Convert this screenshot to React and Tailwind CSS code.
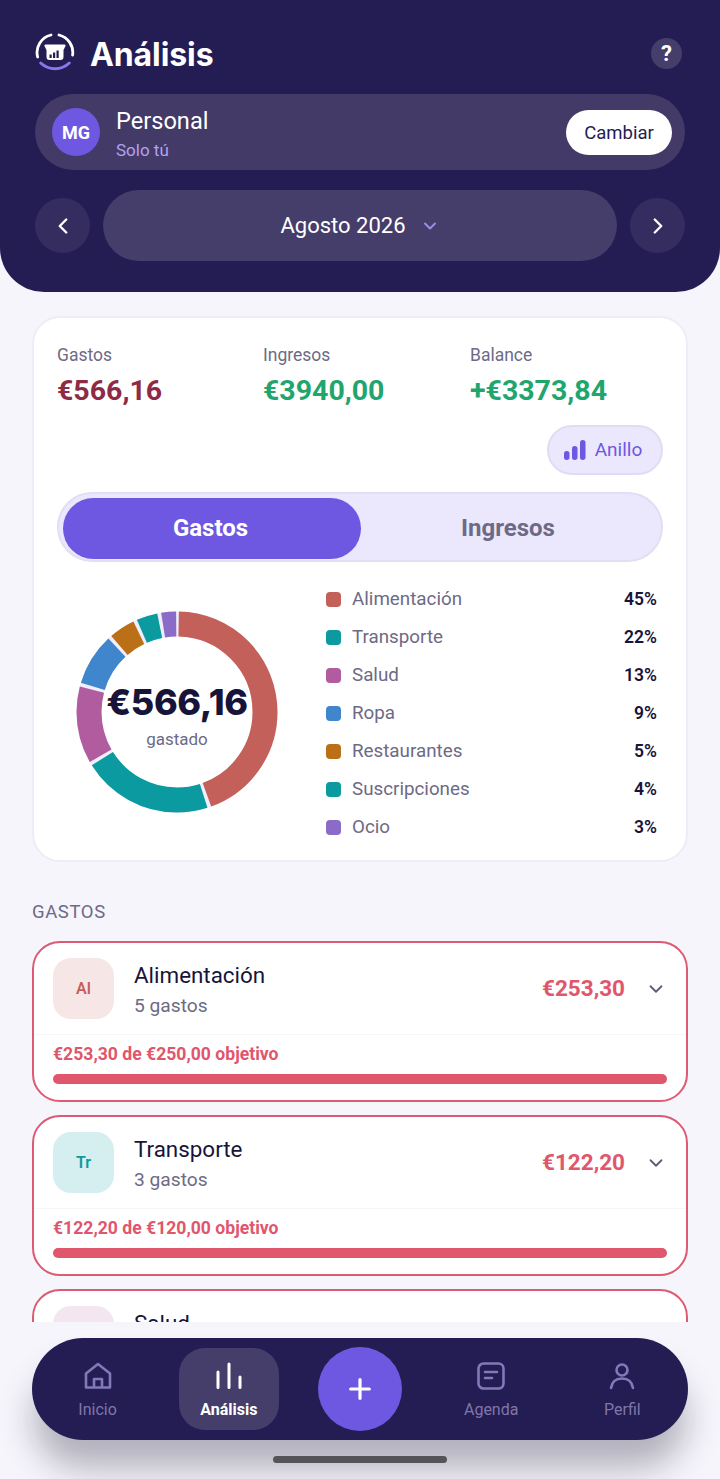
import React from "react";
import { ChevronLeft, ChevronRight, ChevronDown, Plus } from "lucide-react";

const R = "font-['Roboto',sans-serif]";

const legend = [
  ["Alimentación", "45%", "bg-[#c4605a]"],
  ["Transporte", "22%", "bg-[#0a9aa0]"],
  ["Salud", "13%", "bg-[#b05c9e]"],
  ["Ropa", "9%", "bg-[#3f86cc]"],
  ["Restaurantes", "5%", "bg-[#bb7018]"],
  ["Suscripciones", "4%", "bg-[#0a9aa0]"],
  ["Ocio", "3%", "bg-[#8a6cc8]"],
];

const segments = [
  [44.7, "#c4605a"],
  [21.6, "#0a9aa0"],
  [13, "#b05c9e"],
  [8.9, "#3f86cc"],
  [4.8, "#bb7018"],
  [4, "#0a9aa0"],
  [3, "#8a6cc8"],
];

function Donut() {
  const r = 88;
  const c = 2 * Math.PI * r;
  let acc = 0;
  return (
    <svg width="204" height="204" viewBox="0 0 204 204" className="block">
      <g transform="rotate(-90 102 102)">
        <circle cx="102" cy="102" r={r} fill="none" stroke="#f0edfc" strokeWidth="25" />
        {segments.map(([p, col], i) => {
          const len = (p / 100) * c;
          const el = (
            <circle
              key={i}
              cx="102"
              cy="102"
              r={r}
              fill="none"
              stroke={col}
              strokeWidth="25"
              strokeDasharray={`${len - 3.4} ${c - len + 3.4}`}
              strokeDashoffset={-(acc + 1.7)}
            />
          );
          acc += len;
          return el;
        })}
      </g>
    </svg>
  );
}

function Logo() {
  return (
    <svg width="40" height="40" viewBox="0 0 40 40" fill="none" className="shrink-0">
      <path d="M2.6 24 A18 18 0 0 1 16 2" stroke="#fff" strokeWidth="2.8" strokeLinecap="round" />
      <path d="M24 2 A18 18 0 0 1 37.6 22" stroke="#fff" strokeWidth="2.8" strokeLinecap="round" />
      <path d="M5.7 30 A20.8 20.8 0 0 0 34.3 30" stroke="#8b74ec" strokeWidth="3" strokeLinecap="round" />
      <path d="M10.5 11.5 H29.5 Q31 11.5 30.5 13 L28.5 17 V24 Q28.5 27 25.5 27 H14.5 Q11.5 27 11.5 24 V17 L9.5 13 Q9 11.5 10.5 11.5 Z" fill="#fff" />
      <rect x="14.5" y="21.5" width="2.2" height="3.5" fill="#241d54" />
      <rect x="18" y="19.5" width="2.2" height="5.5" fill="#241d54" />
      <rect x="21.5" y="17.5" width="2.2" height="7.5" fill="#241d54" />
    </svg>
  );
}

function CategoryCard({ abbr, name, sub, amount, goal, tileBg, tileText }) {
  return (
    <div className="rounded-[28px] border-2 border-[#dc5a72] bg-white shrink-0 h-[161px] flex flex-col">
      <div className="flex items-center h-[92px] pl-[19px] pr-[19px] border-b border-[#f6f5fb] shrink-0">
        <div className={`w-[61px] h-[61px] rounded-[18px] flex items-center justify-center text-[16px] font-semibold ${tileBg} ${tileText}`}>
          {abbr}
        </div>
        <div className="ml-5 flex-1 flex flex-col mt-[1px]">
          <span className="text-[22.4px] leading-[28px] text-[#17143a]">{name}</span>
          <span className="text-[19.2px] leading-[24px] mt-[5px] text-[#6d6a85]">{sub}</span>
        </div>
        <span className="text-[22.5px] font-bold text-[#e0566c] mr-[20px]">{amount}</span>
        <ChevronDown size={22} strokeWidth={2} className="text-[#5f5c78]" />
      </div>
      <div className="px-[19px] pt-[9px]">
        <div className="text-[17.6px] leading-[20px] font-bold text-[#e0566c]">{goal}</div>
        <div className="mt-[10px] h-[10px] rounded-full bg-[#e0566c]" />
      </div>
    </div>
  );
}

function NavItem({ label, children, active }) {
  return (
    <div className={`flex flex-col items-center pt-[14px] w-[100px] h-[82px] ${active ? "rounded-[26px] bg-[#453d6a]" : ""}`}>
      {children}
      <span className={`text-[16px] leading-[18px] mt-[11px] ${active ? "font-bold text-white" : "text-[#7f76a8]"}`}>{label}</span>
    </div>
  );
}

export default function App() {
  return (
    <div className={`relative w-[720px] h-[1479px] overflow-hidden bg-[#f6f5fc] flex flex-col ${R}`}>
      <header className="h-[292px] shrink-0 bg-[#241d54] rounded-b-[44px] px-[35px] pt-[33px]">
        <div className="flex items-center h-[40px]">
          <Logo />
          <h1 className="ml-[15px] mt-[4px] text-[32px] font-bold text-white font-['Inter',sans-serif] tracking-[-0.1px]">Análisis</h1>
          <div className="ml-auto mr-[3px] w-[31px] h-[31px] rounded-full bg-[#453d6a] flex items-center justify-center text-white font-bold text-[22px]">?</div>
        </div>
        <div className="mt-[21px] h-[76px] rounded-full bg-[#433a68] flex items-center pl-[17px] pr-[13px]">
          <div className="w-[48px] h-[48px] rounded-full bg-[#6e58e2] flex items-center justify-center text-white font-bold text-[18px]">MG</div>
          <div className="ml-4 flex-1 flex flex-col mt-[2px]">
            <span className="text-[23.6px] leading-[30px] text-white">Personal</span>
            <span className="text-[17px] leading-[20px] mt-[4px] text-[#b3a2f0]">Solo tú</span>
          </div>
          <div className="w-[106px] h-[45px] rounded-full bg-white flex items-center justify-center pt-[4px] text-[18.5px] text-[#241d54]">Cambiar</div>
        </div>
        <div className="mt-[20px] flex items-center gap-[13px]">
          <div className="w-[55px] h-[55px] rounded-full bg-[#352d5f] flex items-center justify-center text-white">
            <ChevronLeft size={26} strokeWidth={2.2} />
          </div>
          <div className="flex-1 h-[71px] rounded-[36px] bg-[#453d6a] flex items-center justify-center gap-[14px]">
            <span className="text-[22px] text-white">Agosto 2026</span>
            <ChevronDown size={20} strokeWidth={2.2} className="text-[#a08fe8]" />
          </div>
          <div className="w-[55px] h-[55px] rounded-full bg-[#352d5f] flex items-center justify-center text-white">
            <ChevronRight size={26} strokeWidth={2.2} />
          </div>
        </div>
      </header>

      <main className="h-[1030px] shrink-0 overflow-hidden px-[32px] pt-[24px] flex flex-col">
        <section className="h-[546px] shrink-0 rounded-[28px] border-2 border-[#eeedf6] bg-white px-[23px] pt-[27px]">
          <div className="grid grid-cols-[206px_207px_1fr]">
            <div>
              <div className="text-[17.5px] leading-[20px] text-[#6d6a85]">Gastos</div>
              <div className="mt-[8px] text-[28.5px] leading-[36px] font-bold text-[#8e2a44]">€566,16</div>
            </div>
            <div>
              <div className="text-[17.5px] leading-[20px] text-[#6d6a85]">Ingresos</div>
              <div className="mt-[8px] text-[28.5px] leading-[36px] font-bold text-[#1fa56e]">€3940,00</div>
            </div>
            <div>
              <div className="text-[17.5px] leading-[20px] text-[#6d6a85]">Balance</div>
              <div className="mt-[8px] text-[28.5px] leading-[36px] font-bold text-[#1fa56e]">+€3373,84</div>
            </div>
          </div>
          <div className="mt-[16px] flex justify-end">
            <div className="w-[116px] h-[50px] rounded-full bg-[#ebe7fd] border-2 border-[#e0dcf3] flex items-center justify-center gap-[9px] pr-[4px] text-[#6e58e2]">
              <svg width="22" height="20" viewBox="0 0 22 20" fill="#6e58e2">
                <rect x="0" y="11" width="5.5" height="9" rx="2.7" />
                <rect x="8" y="6" width="5.5" height="14" rx="2.7" />
                <rect x="16" y="0" width="5.5" height="20" rx="2.7" />
              </svg>
              <span className="text-[19px]">Anillo</span>
            </div>
          </div>
          <div className="mt-[17px] h-[70px] rounded-full bg-[#ebe7fd] border-2 border-[#e2def3] pl-[4px] pr-[4px] pt-[4px] pb-[1px] flex">
            <div className="w-[298px] rounded-full bg-[#6e58e2] flex items-center justify-center pr-[3px] pb-[2px] text-[24px] font-bold text-white">Gastos</div>
            <div className="flex-1 flex items-center justify-center pr-[2px] pb-[2px] text-[24px] font-bold text-[#6d6a85]">Ingresos</div>
          </div>
          <div className="mt-[17px] flex">
            <div className="relative w-[204px] h-[204px] ml-[18px] mt-[31px] shrink-0">
              <Donut />
              <div className="absolute inset-0 flex flex-col items-center justify-center">
                <span className="text-[36px] leading-[40px] font-extrabold tracking-[-0.4px] text-[#17143a] font-['Inter',sans-serif] mt-[6px]">€566,16</span>
                <span className="text-[17px] leading-[20px] mt-[7px] text-[#6d6a85]">gastado</span>
              </div>
            </div>
            <div className="ml-[47px] flex-1 flex flex-col gap-[13px] mr-[6px] pt-[8px]">
              {legend.map(([name, pct, cls]) => (
                <div key={name} className="flex items-center h-[25px]">
                  <span className={`w-[15px] h-[15px] rounded-[4px] ${cls}`} />
                  <span className="ml-[11px] flex-1 text-[18.8px] text-[#6d6a85]">{name}</span>
                  <span className="text-[17.5px] font-semibold text-[#17143a]">{pct}</span>
                </div>
              ))}
            </div>
          </div>
        </section>

        <div className="mt-[39px] text-[18.5px] leading-[22px] tracking-[0.6px] text-[#6d6a85] shrink-0">GASTOS</div>
        <div className="mt-[18px] flex flex-col gap-[13px]">
          <CategoryCard abbr="Al" name="Alimentación" sub="5 gastos" amount="€253,30" goal="€253,30 de €250,00 objetivo" tileBg="bg-[#f6e7e6]" tileText="text-[#c4605a]" />
          <CategoryCard abbr="Tr" name="Transporte" sub="3 gastos" amount="€122,20" goal="€122,20 de €120,00 objetivo" tileBg="bg-[#d5eff0]" tileText="text-[#0a9aa0]" />
          <CategoryCard name="Salud" sub={"\u00a0"} tileBg="bg-[#f3e6f1]" tileText="text-[#b05c9e]" />
        </div>
      </main>

      <div className="mt-[16px] mx-[32px] h-[102px] shrink-0 rounded-full bg-[#241d54] shadow-[0_30px_34px_-2px_rgba(20,18,40,0.3)] grid grid-cols-5 items-center justify-items-center">
        <NavItem label="Inicio">
          <svg width="28" height="28" viewBox="0 0 28 28" fill="none" stroke="#8378b8" strokeWidth="2.6" strokeLinejoin="round">
            <path d="M2 11.5 L14 2 L26 11.5 V25.5 H2 Z" />
            <path d="M10 25.5 V17 H18 V25.5" />
          </svg>
        </NavItem>
        <NavItem label="Análisis" active>
          <svg width="28" height="28" viewBox="0 0 28 28" fill="none" stroke="#fff" strokeWidth="3" strokeLinecap="round">
            <path d="M3 10 V25.5 M14 2 V25.5 M25 15 V25.5" />
          </svg>
        </NavItem>
        <div className="w-[84px] h-[84px] rounded-full bg-[#6e58e2] flex items-center justify-center text-white">
          <Plus size={32} strokeWidth={2.4} />
        </div>
        <NavItem label="Agenda">
          <svg width="28" height="28" viewBox="0 0 28 28" fill="none" stroke="#8378b8" strokeWidth="2.6" strokeLinecap="round" strokeLinejoin="round">
            <rect x="1.5" y="1.5" width="25" height="25" rx="5" />
            <path d="M8 10 H20 M8 16 H15" />
          </svg>
        </NavItem>
        <NavItem label="Perfil">
          <svg width="28" height="28" viewBox="0 0 28 28" fill="none" stroke="#8378b8" strokeWidth="2.6" strokeLinecap="round">
            <circle cx="14" cy="8" r="5.5" />
            <path d="M3 26 C4 19.5 8.5 16.5 14 16.5 C19.5 16.5 24 19.5 25 26" />
          </svg>
        </NavItem>
      </div>

      <div className="absolute left-[273px] top-[1456px] w-[174px] h-[7px] rounded-full bg-[#555459]" />
    </div>
  );
}
